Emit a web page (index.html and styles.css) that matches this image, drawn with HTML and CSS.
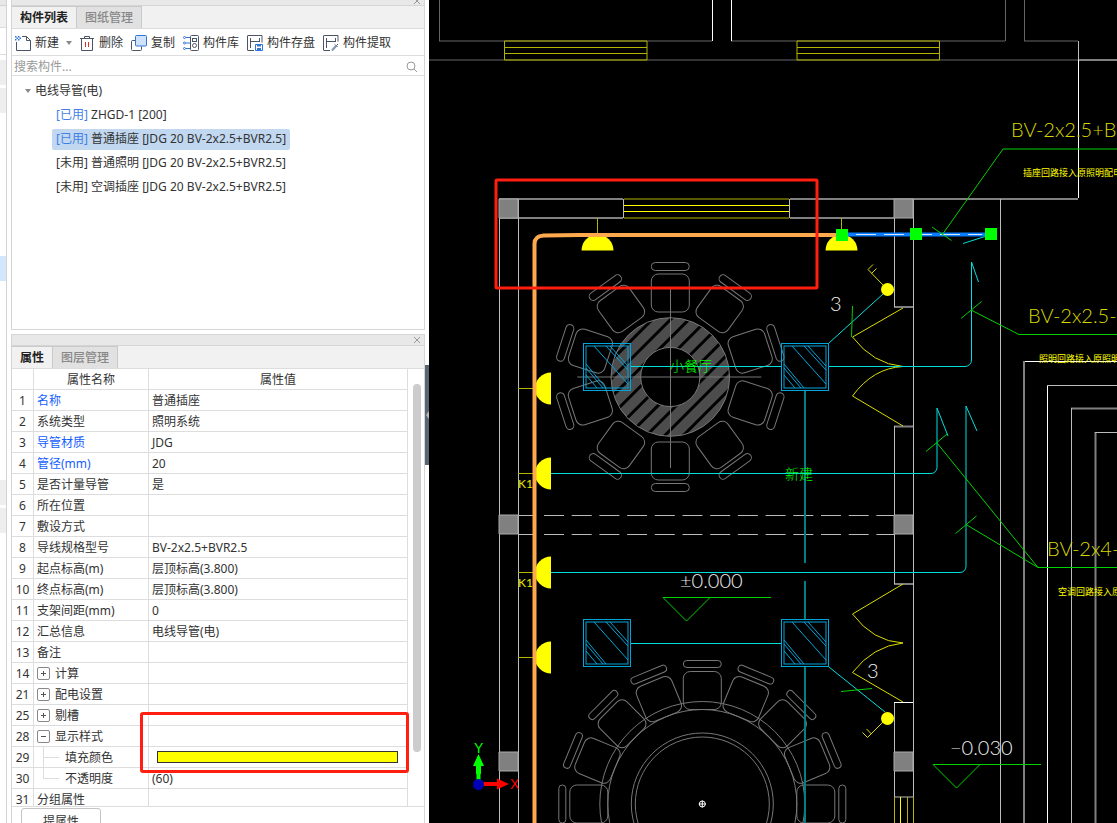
FILE: index.html
```html
<!DOCTYPE html>
<html lang="zh-CN">
<head>
  <meta charset="UTF-8">
  <title>构件列表</title>
  <meta name="viewport" content="width=device-width, initial-scale=1.0">
  <link rel="stylesheet" href="styles.css">
</head>
<body>

<div class="app">
  <div class="strip">
    <div class="strip-title"></div>
    <div class="strip-tabs"></div>
    <div class="strip-tools"></div>
    <div class="strip-list">
      <i></i><i></i>
      <i class="active"></i>
      <i class="lower"></i><i></i>
    </div>
  </div>

  <aside class="dock">
    <section class="panel components">
      <div class="panel-title short"><button class="close" aria-label="关闭"><svg viewBox="0 0 8 8"><path d="M1 1l6 6M7 1l-6 6"/></svg></button></div>
      <div class="tabs">
        <button class="tab on">构件列表</button>
        <button class="tab">图纸管理</button>
      </div>
      <div class="toolbar">
        <button class="tool">
          <svg viewBox="0 0 16 16"><path class="ln" d="M7 1.500h4.500l4 4v10H1.500V7M11.500 1.500v4h4"/><path class="bl" d="M0 1h1.500v1.500H0zM3 1h1.500v1.500H3zM1.500 2.500H3V4H1.500zM4.500 2.500H6V4H4.500zM0 4h1.500v1.500H0zM3 4h1.500v1.500H3z"/></svg>
          新建
        </button>
        <i class="caret"></i>
        <button class="tool">
          <svg viewBox="0 0 16 16"><path class="ln" d="M5.500 3.500v-2h5v2M1 3.500h14M2.500 4v11.500h11V4"/><path class="rd" d="M6.500 7v5M9.500 7v5"/></svg>
          删除
        </button>
        <button class="tool">
          <svg viewBox="0 0 16 16"><path class="ln" d="M4.500 5.500h-3a1 1 0 0 0-1 1v8a1 1 0 0 0 1 1h8a1 1 0 0 0 1-1v-3"/><rect class="cp" x="4.500" y=".5" width="11" height="10.500" rx="1"/></svg>
          复制
        </button>
        <button class="tool">
          <svg viewBox="0 0 16 16"><path class="bs" d="M3 2.500h4M3 8h4M3 13.500h4"/><circle class="bs" cx="1.500" cy="2.500" r="1"/><circle class="bs" cx="1.500" cy="8" r="1"/><circle class="bs" cx="1.500" cy="13.500" r="1"/><rect class="ln" x="7.500" y=".5" width="8" height="15" rx="1"/><rect class="ln" x="9.500" y="3.500" width="4" height="3"/><circle class="ln" cx="11.500" cy="10.500" r="2"/></svg>
          构件库
        </button>
        <button class="tool">
          <svg viewBox="0 0 16 16"><path class="ln" d="M7 15.500H1a.5.5 0 0 1-.5-.5V1A.5.5 0 0 1 1 .5h14v7M3.500 3v10M3.500 6.500h9M12.500 3v4"/><path class="bs" d="M8.500 9.500h7v6h-7z"/><path class="bl" d="M10 9.500h4v2h-4zM10 13h4v2.500h-4z"/></svg>
          构件存盘
        </button>
        <button class="tool">
          <svg viewBox="0 0 16 16"><path class="ln" d="M7 15.500H1a.5.5 0 0 1-.5-.5V1A.5.5 0 0 1 1 .5h14v6M3.500 3v10M3.500 6.500h9M12.500 3v4"/><path class="pk" d="M9 15.500l4-4.500"/><path class="ln" d="M12 9.500l2.500 2.500M13.500 10.500l1.500-1.500"/></svg>
          构件提取
        </button>
      </div>
      <label class="search">
        <input type="text" placeholder="搜索构件..." aria-label="搜索构件">
        <svg viewBox="0 0 12 12"><circle cx="5" cy="5" r="4"/><path d="M8 8l3 3"/></svg>
      </label>
      <ul class="tree">
        <li class="root"><i class="caret"></i>电线导管(电)</li>
        <li><span class="item"><b>[已用]</b> ZHGD-1 [200]</span></li>
        <li><span class="item selected"><b>[已用]</b> 普通插座 [JDG 20 BV-2x2.5+BVR2.5]</span></li>
        <li><span class="item">[未用] 普通照明 [JDG 20 BV-2x2.5+BVR2.5]</span></li>
        <li><span class="item">[未用] 空调插座 [JDG 20 BV-2x2.5+BVR2.5]</span></li>
      </ul>
    </section>

    <section class="panel props">
      <div class="panel-title"><button class="close" aria-label="关闭"><svg viewBox="0 0 8 8"><path d="M1 1l6 6M7 1l-6 6"/></svg></button></div>
      <div class="tabs">
        <button class="tab on">属性</button>
        <button class="tab">图层管理</button>
      </div>
      <div class="grid-wrap">
        <div class="grid-scroll">
          <table class="grid">
            <colgroup><col class="c-num"><col class="c-name"><col></colgroup>
            <thead>
              <tr><th></th><th>属性名称</th><th>属性值</th></tr>
            </thead>
            <tbody>
              <tr><td>1</td><td class="key">名称</td><td>普通插座</td></tr>
              <tr><td>2</td><td>系统类型</td><td>照明系统</td></tr>
              <tr><td>3</td><td class="key">导管材质</td><td>JDG</td></tr>
              <tr><td>4</td><td class="key">管径(mm)</td><td>20</td></tr>
              <tr><td>5</td><td>是否计量导管</td><td>是</td></tr>
              <tr><td>6</td><td>所在位置</td><td></td></tr>
              <tr><td>7</td><td>敷设方式</td><td></td></tr>
              <tr><td>8</td><td>导线规格型号</td><td>BV-2x2.5+BVR2.5</td></tr>
              <tr><td>9</td><td>起点标高(m)</td><td>层顶标高(3.800)</td></tr>
              <tr><td>10</td><td>终点标高(m)</td><td>层顶标高(3.800)</td></tr>
              <tr><td>11</td><td>支架间距(mm)</td><td>0</td></tr>
              <tr><td>12</td><td>汇总信息</td><td>电线导管(电)</td></tr>
              <tr><td>13</td><td>备注</td><td></td></tr>
              <tr><td>14</td><td><div class="group"><button class="fold" aria-label="展开"></button>计算</div></td><td></td></tr>
              <tr><td>21</td><td><div class="group"><button class="fold" aria-label="展开"></button>配电设置</div></td><td></td></tr>
              <tr><td>25</td><td><div class="group"><button class="fold" aria-label="展开"></button>剔槽</div></td><td></td></tr>
              <tr><td>28</td><td><div class="group"><button class="fold open" aria-label="收起"></button>显示样式</div></td><td></td></tr>
              <tr><td>29</td><td class="leaf"><div class="branch"><label for="fill">填充颜色</label></div></td><td class="color-cell"><input type="color" id="fill" value="#ffff00"></td></tr>
              <tr><td>30</td><td class="leaf"><div class="branch last">不透明度</div></td><td>(60)</td></tr>
              <tr><td>31</td><td>分组属性</td><td></td></tr>
            </tbody>
          </table>
        </div>
        <div class="scrollbar"><i></i></div>
        <div class="mark"></div>
      </div>
      <div class="footer"><button class="foot-btn">提属性</button></div>
    </section>
    <button class="handle" aria-label="折叠"></button>
  </aside>

  <main class="canvas">
    <svg class="drawing" viewBox="429 0 688 823" preserveAspectRatio="xMinYMin slice">
      <defs>
        <pattern id="hatch" width="13" height="13" patternUnits="userSpaceOnUse" patternTransform="rotate(45)">
          <path d="M1 0v13M3 0v13M5 0v13M7 0v13M9 0v13" stroke="#999"/>
        </pattern>
        <g id="chair">
          <rect x="-19" y="-103" width="38" height="38" rx="7"/>
          <rect x="-19" y="-114.500" width="38" height="8" rx="4"/>
        </g>
        <g id="chair-far">
          <rect x="-19" y="-132.500" width="38" height="38" rx="7"/>
          <rect x="-19" y="-143.500" width="38" height="7" rx="3.500"/>
        </g>
        <g id="lamp">
          <rect x=".5" y=".5" width="47" height="47"/>
          <rect x="3" y="3" width="42" height="42"/>
          <path d="M11 3l34 38M23 3l22 24M27 3l18 20M3 21l20 24M3 25l17 20M3 32l11 13"/>
        </g>
        <path id="socket" d="M-16 16a16 16 0 0 1 32 0z"/>
      </defs>

      <!-- upper building -->
      <g class="dim">
        <path d="M439.500 0v41M1005.500 0v41M1024.500 0v41M439 41h273M731 41h274M1024 41h54M429 60h649"/>
      </g>
      <path class="wall" d="M1078 60h39"/>
      <path class="white" d="M712.500 0v41M731.500 0v41M1078.500 60v138"/>
      <path class="light" d="M1078.500 41v19"/>
      <path class="win" d="M504.500 41h142.500v19H504.500zM504 47.500h143M504 53.500h143M797 41h142.500v19H797zM797 47.500h143M797 53.500h143"/>

      <!-- tables and chairs -->
      <g class="furn" transform="translate(670.300 377)">
        <path class="ring" fill-rule="evenodd" d="M-59.300 0a59.300 59.300 0 1 0 118.600 0a59.300 59.300 0 1 0-118.600 0zM-29.600 0a29.600 29.600 0 1 0 59.200 0a29.600 29.600 0 1 0-59.200 0z"/>
        <path d="M-93 0H91M.2-88V91"/>
        <use href="#chair"/>
        <use href="#chair" transform="rotate(36)"/>
        <use href="#chair" transform="rotate(72)"/>
        <use href="#chair" transform="rotate(108)"/>
        <use href="#chair" transform="rotate(144)"/>
        <use href="#chair" transform="rotate(180)"/>
        <use href="#chair" transform="rotate(216)"/>
        <use href="#chair" transform="rotate(252)"/>
        <use href="#chair" transform="rotate(288)"/>
        <use href="#chair" transform="rotate(324)"/>
      </g>
      <g class="furn" transform="translate(702.300 804)">
        <circle r="67"/><circle r="71"/><circle r="94.500"/><circle r="102.500"/>
        <use href="#chair-far"/>
        <use href="#chair-far" transform="rotate(22.500)"/>
        <use href="#chair-far" transform="rotate(45)"/>
        <use href="#chair-far" transform="rotate(67.500)"/>
        <use href="#chair-far" transform="rotate(90)"/>
        <use href="#chair-far" transform="rotate(-22.500)"/>
        <use href="#chair-far" transform="rotate(-45)"/>
        <use href="#chair-far" transform="rotate(-67.500)"/>
        <use href="#chair-far" transform="rotate(-90)"/>
        <path class="white" d="M-3.500 0h7M0-3.500v7"/><circle class="white" r="3"/>
      </g>

      <!-- room walls -->
      <path class="wall" d="M499 199h124M499 218h124M790 199h288M790 218h104M894 307h19.500M894 426.500h19.500M894 584h19.500"/>
      <path class="light" d="M499.500 199v624M518.500 199v624M623.500 199v19M789.500 199v19M894.500 199v108M894.500 426v158M913.500 199v624M894.500 702v95M1000.500 199v624M518 515.500h15M518 534.500h15M894 797h19.500"/>
      <path class="light" stroke-dasharray="20 7.700" d="M544 515.500h350M544 534.500h350"/>
      <path class="white" d="M894 702.500h19M1047.500 385.500v438M1024 361.500h93"/>
      <path class="wall" d="M1024 361v462M1071 408.500h46M1095.500 432v391"/>
      <path class="light" d="M1047 385.500h70M1071.500 408v415M1095 432.500h22"/>
      <path class="col" d="M499 199h19v19h-19zM894 199h19v19h-19zM499 515h19v19h-19zM894 515h19v19h-19zM499 752h19v19h-19zM894 752h19v19h-19z"/>
      <path class="win" d="M624 199h165M624 218h165M894.500 797v26M907.500 797v26M913.500 797v26"/>
      <path class="yellow" d="M624 205.500h165M624 211.500h165M900.500 797v26"/>

      <!-- doors -->
      <path class="yellow thin" d="M903 308l-50.500 29Q873 364 903 366.500M903 366.500Q873 368 852.500 396L903 426M903 584l-50.500 30Q873 641.500 903 643M903 643Q873 646 852.500 672.500L903 702"/>

      <!-- lighting circuits -->
      <path class="teal" d="M805 391v172M805 581v38M805 667v156"/>
      <path class="cyan" d="M631 366.500h150M829 366.500h136a6.500 6.500 0 0 0 6.500-6.500V262l7 20M551 473.500h380a6 6 0 0 0 6-6V408l11 28M551 572.500h409a6 6 0 0 0 6-6V406l11 25M631 643.500h150M829 343l54-49M829 667l56 45M963 243.500l22-7"/>
      <g class="lamps">
        <use href="#lamp" x="583" y="343"/>
        <use href="#lamp" x="781" y="343"/>
        <use href="#lamp" x="583" y="619"/>
        <use href="#lamp" x="781" y="619"/>
      </g>
      <path class="yellow thin" d="M883 285l-15-15.500 5-5M871.500 273.500l5-5M883 722l-15.500 15.500-5-5M871.500 734l-5-5"/>
      <circle class="dot" cx="887.500" cy="289.500" r="6.500"/>
      <circle class="dot" cx="887.500" cy="718.500" r="6.500"/>

      <!-- sockets and conduit -->
      <path class="win" d="M597.500 218v17M841.500 218v14M518 388.500h16M518 473.500h16M518 572.500h16M518 657.500h16"/>
      <g class="dot">
        <use href="#socket" transform="translate(597.500 234.500)"/>
        <use href="#socket" transform="translate(841.500 234.500)"/>
        <use href="#socket" transform="translate(535 388.500) rotate(-90)"/>
        <use href="#socket" transform="translate(535 473.500) rotate(-90)"/>
        <use href="#socket" transform="translate(535 572.500) rotate(-90)"/>
        <use href="#socket" transform="translate(535 657.500) rotate(-90)"/>
      </g>
      <path class="conduit" d="M534.500 823V244q0-8 9-8.500L580 235h262"/>
      <path class="picked" d="M848 234.500h137"/>
      <path class="picked-dash" d="M856 234.500h126"/>
      <path class="grip" d="M836 229h12v12h-12zM910 228h12v12h-12zM985 228h12v12h-12z"/>

      <!-- leaders -->
      <path class="green" d="M1117 149H1003l-61 86M932 227l19.500 13.500M1117 334.500h-98L971 310M961 318.500l20.500-17M1117 567.500h-79L937 443M1038 567.500l-72-43M926 451.500l21-17.500M955.500 533.500l21-17.500M852.500 306l-1 31M841 691.500l31-3M663 597.500h108M663 597.500l23.500 23.500L710 597.500M933 764.500h108M933 764.500l23.500 23.500L980 764.500"/>

      <g class="cad">
        <text class="note" x="1011" y="137">BV-2x2.5+B</text>
        <text class="note" x="1028" y="323">BV-2x2.5-</text>
        <text class="note" x="1047" y="556">BV-2x4-</text>
        <text class="remark" x="1023" y="176">插座回路接入原照明配电箱</text>
        <text class="remark" x="1039" y="362">照明回路接入原照明配</text>
        <text class="remark" x="1058" y="595">空调回路接入原</text>
        <text class="k" x="518" y="488">K1</text>
        <text class="k" x="518" y="587">K1</text>
        <text class="level" x="680" y="588">±0.000</text>
        <text class="level" x="950" y="755">−0.030</text>
        <text class="level" x="830" y="311">3</text>
        <text class="level" x="867" y="678">3</text>
        <text class="room" x="670" y="371">小餐厅</text>
        <text class="room" x="785" y="479">新建</text>
      </g>

      <!-- axis -->
      <path d="M478.500 784v-12" stroke="#0f0" stroke-width="4"/>
      <path d="M473 766l5.500-12 5.500 12zM476 765h5v9h-5z" fill="#0f0"/>
      <path d="M482 784h16" stroke="#f00" stroke-width="4"/>
      <path d="M497 778.500l12 5.500-12 5.500z" fill="#f00"/>
      <circle cx="478.500" cy="784.500" r="5.500" fill="#0000b4"/>
      <text class="axis" x="474" y="753" fill="#0f0">Y</text>
      <text class="axis" x="510" y="789" fill="#f00">X</text>

      <rect x="496" y="180" width="321" height="108" rx="1" fill="none" stroke="#ff1e10" stroke-width="3"/>
    </svg>
  </main>
</div>

</body>
</html>
```

FILE: styles.css
```css
* { box-sizing: border-box; }
body {
  margin: 0; background: #fff; color: #333;
  font: 12px/16px "Noto Sans", "Noto Sans CJK SC", sans-serif;
}
button, input { font: inherit; color: inherit; margin: 0; padding: 0; border: 0; background: none; }
.app { display: flex; height: 100vh; overflow: hidden; }

/* edge of the neighbouring dock */
.strip { flex: none; width: 7px; border-right: 1px solid #d0d2d6; display: flex; flex-direction: column; }
.strip-title { height: 6px; background: #e8e8e8; border-bottom: 1px solid #d0d2d6; }
.strip-tabs { height: 22px; background: #f1f1f1; border-bottom: 1px solid #ddd; }
.strip-tools { height: 27px; border-bottom: 1px solid #ddd; }
.strip-list { padding-top: 5px; display: flex; flex-direction: column; gap: 3px; }
.strip-list i { height: 25px; background: #eee; }
.strip-list .active { background: #d4e6fb; margin-top: 140px; }
.strip-list .lower { margin-top: 196px; }

.dock { flex: none; width: 422px; padding: 0 4px; position: relative; display: flex; flex-direction: column; gap: 4px; }
.panel { border: 1px solid #d5d5d5; display: flex; flex-direction: column; }
.components { flex: 0 0 330px; border-top: 0; }
.props { flex: 1; min-height: 0; border-bottom: 0; }
.panel-title { flex: none; height: 11px; background: #e8e8e8; border-bottom: 1px solid #d5d5d5; display: flex; justify-content: flex-end; align-items: center; padding-right: 3px; }
.panel-title.short { height: 6px; align-items: flex-end; overflow: hidden; }
.close { width: 8px; height: 8px; display: flex; }
.close svg { width: 8px; height: 8px; fill: none; stroke: #999; }

.tabs { flex: none; height: 23px; background: #f1f1f1; border-bottom: 1px solid #ddd; display: flex; }
.tab { padding: 0 8px; border-right: 1px solid #c8cace; border-top: 1px solid #c8cace; background: #e1e1e1; color: #888; font-weight: 500; }
.tab.on { background: #f1f1f1; color: #222; font-weight: 700; }

.toolbar { flex: none; height: 27px; border-bottom: 1px solid #ddd; display: flex; align-items: center; gap: 8px; padding: 2px 0 0 3px; }
.tool { display: flex; align-items: center; gap: 4px; white-space: nowrap; }
.tool svg { width: 16px; height: 16px; fill: none; }
.toolbar .caret { margin: 0 -1px; }
.caret { width: 6px; height: 4px; background: #888; clip-path: polygon(0 0, 100% 0, 50% 100%); }
.ln { stroke: #4b5566; }
.bs { stroke: #2f74d8; }
.bl { fill: #2f74d8; }
.rd { stroke: #e02b2b; }
.cp { stroke: #2f74d8; fill: #cfe2fb; }
.pk { stroke: #7f93b2; stroke-width: 2; }

.search { flex: none; height: 20px; border-bottom: 1px solid #ddd; display: flex; align-items: center; padding: 2px 6px 0 2px; }
.search input { flex: 1; outline: 0; }
.search input::placeholder { color: #999; }
.search svg { width: 12px; height: 12px; fill: none; stroke: #999; }

.tree { list-style: none; margin: 0; padding: 3px 0 0 40px; }
.tree li { height: 24px; display: flex; align-items: center; white-space: pre; }
.tree .root { margin-left: -27px; gap: 4px; }
.item { padding: 2px 4px; height: 21px; border-radius: 2px; }
.item b { font-weight: 400; color: #3f7fe6; }
.item.selected { background: #c1d8f0; }

.grid-wrap { flex: 1; min-height: 0; position: relative; display: flex; border-bottom: 1px solid #ddd; }
.grid-scroll { flex: 1; overflow: hidden; }
.grid { width: 100%; table-layout: fixed; border-collapse: separate; border-spacing: 0; }
.c-num { width: 22px; }
.c-name { width: 115px; }
.grid th, .grid td { height: 21px; padding: 2px 3px 0; font-weight: 400; line-height: 18px; border-right: 1px solid #ddd; border-bottom: 1px solid #ddd; white-space: nowrap; }
.grid td:first-child { text-align: center; padding: 2px 0 0; }
.grid .key { color: #1660ff; }
.group { display: flex; align-items: center; gap: 5px; }
.fold { width: 13px; height: 13px; margin-bottom: 2px; border: 1px solid #888; border-radius: 2px; background: linear-gradient(#555, #555) center / 5px 1px no-repeat, linear-gradient(#555, #555) center / 1px 5px no-repeat; }
.fold.open { background: linear-gradient(#555, #555) center / 5px 1px no-repeat; }
.grid .leaf { padding: 0 0 0 9px; }
.branch { height: 20px; padding: 2px 0 0 22px; background: linear-gradient(#ddd, #ddd) 0 0 / 1px 100% no-repeat, linear-gradient(#ddd, #ddd) 0 10px / 16px 1px no-repeat; }
.branch.last { background-size: 1px 10px, 16px 1px; }
.grid .color-cell { padding: 0 9px 0 8px; }
.color-cell input { display: block; width: 100%; height: 12px; border: 1px solid #333; background: #ff0; appearance: none; }
.color-cell input::-webkit-color-swatch-wrapper { padding: 0; }
.color-cell input::-webkit-color-swatch { border: 0; }
.scrollbar { flex: none; width: 16px; padding: 15px 3px 54px 5px; display: flex; }
.scrollbar i { flex: 1; border-radius: 4px; background: #ccc; }
.mark { position: absolute; left: 128px; right: 15px; top: 343px; height: 61px; border: 3px solid #ff1e10; border-radius: 3px; }

.footer { flex: none; height: 16px; padding: 1px 9px 0; overflow: hidden; }
.foot-btn { width: 80px; height: 27px; border: 1px solid #c4c4c4; border-radius: 3px; }
.handle { position: absolute; right: 0; top: 365px; width: 4px; height: 100px; background: #5b6472; }
.handle::after { content: ""; position: absolute; right: 0; top: 46px; border: 4px solid transparent; border-left: 0; border-right: 3px solid #bbb; }

/* drawing area */
.canvas { flex: 1; min-width: 0; background: #000; }
.drawing { display: block; width: 100%; height: 100%; fill: none; stroke-width: 1; }
.dim { stroke: #666; }
.wall { stroke: #808080; stroke-width: 2; }
.light { stroke: #bbb; }
.white { stroke: #fff; }
.col { fill: #808080; stroke: #aaa; }
.win { stroke: #b4b400; }
.yellow { stroke: #ff0; }
.thin { stroke: #dcdc00; }
.dot { fill: #ff0; }
.furn { stroke: #777; }
.ring { fill: url(#hatch); }
.cyan { stroke: #00dede; }
.teal { stroke: #008080; stroke-width: 2; }
.lamps { stroke: #00a5dc; }
.conduit { stroke: #ffa94f; stroke-width: 4; }
.picked { stroke: #0a7cff; stroke-width: 4; }
.picked-dash { stroke: #d5e8ff; stroke-dasharray: 20 8; }
.grip { fill: #0f0; }
.green { stroke: #00d200; }
.cad { font-family: Lato, "Noto Sans CJK SC", sans-serif; font-weight: 300; }
.note { font-size: 20px; fill: #d8d800; }
.remark { font-size: 9px; font-weight: 400; fill: #ff0; }
.k { font-size: 12px; font-weight: 400; fill: #e6e600; }
.level { font-size: 20px; fill: #eee; }
.room { font-size: 14px; fill: #0f0; }
.axis { font: 14px "Liberation Sans", sans-serif; }
```
